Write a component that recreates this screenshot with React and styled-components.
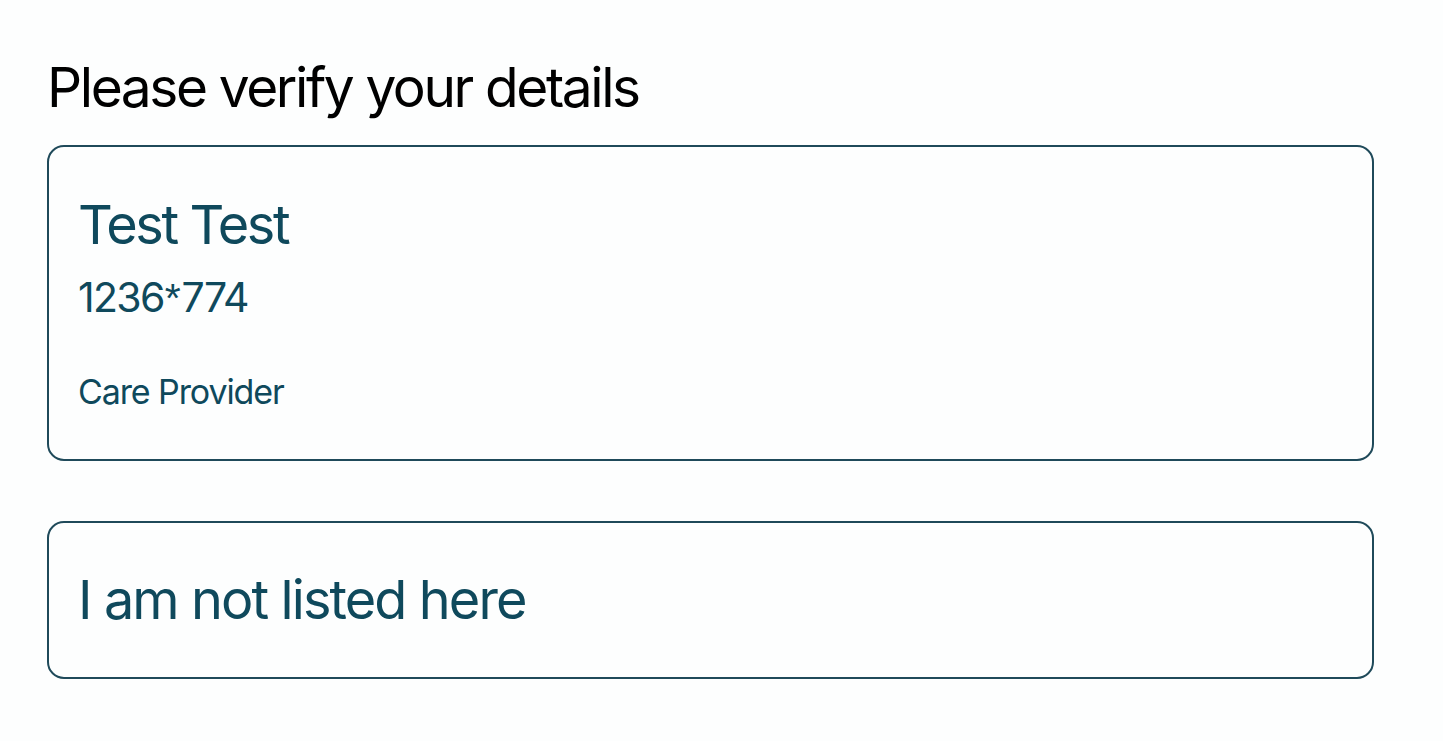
import React from "react";
import styled, { createGlobalStyle } from "styled-components";

const Global = createGlobalStyle`
  html, body { margin: 0; padding: 0; background: #fdfefe; }
  body { font-family: Inter, "Noto Sans", sans-serif; }
`;

const Page = styled.main`
  padding: 60px 69px 0 47px;
  display: flex;
  flex-direction: column;
  gap: 60px;
`;

const Title = styled.h1`
  margin: 0 0 -30px;
  padding-left: 0;
  font-size: 55px;
  font-weight: 400;
  line-height: 55px;
  color: #000;
  letter-spacing: -2.4px;
`;

const Card = styled.div`
  border: 2px solid #1f4a5a;
  border-radius: 17px;
  padding: 50px 30px 50px 29px;
  display: flex;
  flex-direction: column;
  color: #0f495c;
`;

const Line = styled.div`
  font-size: ${(p) => p.$size}px;
  line-height: ${(p) => p.$size}px;
  letter-spacing: ${(p) => p.$ls}px;
  margin-top: ${(p) => p.$mt || 0}px;
`;

const Star = styled.span`
  font-family: "Liberation Sans", Arial, sans-serif;
  letter-spacing: 0;
  margin: 0 1px;
`;

export default function App() {
  return (
    <>
      <Global />
      <Page>
        <Title>Please verify your details</Title>
        <Card>
          <Line $size={54} $ls={-2.4} $mt={1}>Test Test</Line>
          <Line $size={41} $ls={-1.7} $mt={25}>
            1236<Star>*</Star>774
          </Line>
          <Line $size={34} $ls={-1.1} $mt={56}>Care Provider</Line>
        </Card>
        <Card>
          <Line $size={54} $ls={-1.9}>I am not listed here</Line>
        </Card>
      </Page>
    </>
  );
}
